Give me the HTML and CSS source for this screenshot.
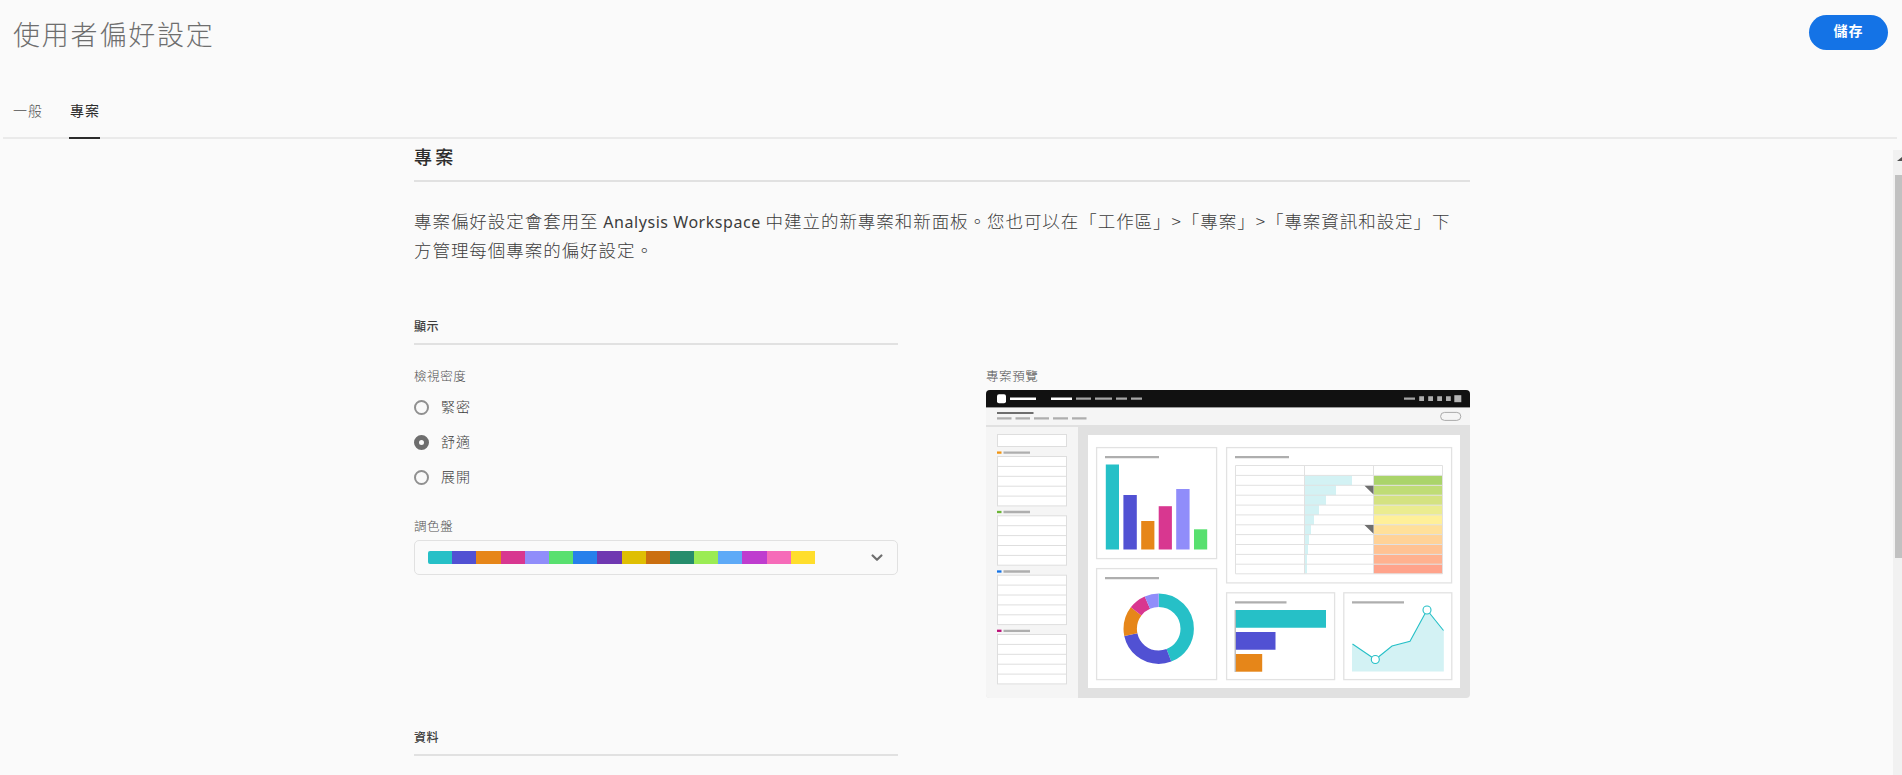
FILE: index.html
```html
<!DOCTYPE html>
<html lang="zh-Hant">
<head>
<meta charset="utf-8">
<title>使用者偏好設定</title>
<link rel="stylesheet" href="styles.css">
</head>
<body>
<header class="header">
  <h1 class="page-title">使用者偏好設定</h1>
  <button class="save">儲存</button>
</header>
<nav class="tabs">
  <a class="tab">一般</a>
  <a class="tab active">專案</a>
</nav>
<div class="scroller">
  <main class="content">
    <h2 class="section-title">專案</h2>
    <p class="intro">專案偏好設定會套用至 <span class="latin">Analysis Workspace</span> 中建立的新專案和新面板。您也可以在「工作區」<span class="gt">&gt;</span>「專案」<span class="gt">&gt;</span>「專案資訊和設定」下<br>方管理每個專案的偏好設定。</p>
    <h3 class="group-title">顯示</h3>
    <div class="columns">
      <div class="column">
        <div class="label">檢視密度</div>
        <div class="radios">
          <label class="radio"><span class="dot"></span><span class="radio-text">緊密</span></label>
          <label class="radio"><span class="dot checked"></span><span class="radio-text">舒適</span></label>
          <label class="radio"><span class="dot"></span><span class="radio-text">展開</span></label>
        </div>
        <div class="label">調色盤</div>
        <div class="select">
          <div class="palette">
            <i class="c1"></i><i class="c2"></i><i class="c3"></i><i class="c4"></i><i class="c5"></i><i class="c6"></i><i class="c7"></i><i class="c8"></i><i class="c9"></i><i class="c10"></i><i class="c11"></i><i class="c12"></i><i class="c13"></i><i class="c14"></i><i class="c15"></i><i class="c16"></i>
          </div>
          <svg class="chevron" width="12" height="8" viewBox="0 0 12 8"><path d="M1.6 1.5 6 5.8 10.4 1.5" fill="none" stroke="#6e6e6e" stroke-width="2.2" stroke-linecap="round" stroke-linejoin="round"/></svg>
        </div>
      </div>
      <div class="column">
        <div class="label">專案預覽</div>
        <svg class="preview" width="484" height="308" viewBox="986 390 484 308">
          <defs>
            <clipPath id="frame"><rect x="986" y="390" width="484" height="308" rx="4"/></clipPath>
            <g id="list">
              <rect x="997.5" y=".5" width="69" height="49.4" fill="#fff"/>
              <path d="M997.5 10.4h69m-69 9.9h69m-69 9.9h69m-69 9.9h69"/>
            </g>
          </defs>
          <g clip-path="url(#frame)">
            <rect x="986" y="390" width="484" height="308" fill="#e1e1e1"/>
            <rect x="986" y="407" width="484" height="18" fill="#f5f5f5"/>
            <rect x="986" y="427" width="92" height="271" fill="#f5f5f5"/>
            <rect x="986" y="390" width="484" height="17" fill="#111"/>
            <rect x="986" y="407" width="484" height="1" fill="#999"/>
            <rect x="1088" y="435" width="372" height="253" fill="#fff"/>
          </g>
          <rect x="997" y="394.2" width="9" height="9" rx="2" fill="#fff"/>
          <path d="M1010 398.7h26m15 0h21" stroke="#fff" stroke-width="2.4"/>
          <path d="M1076 398.7h15m4 0h17m4 0h11m4 0h11M1404 398.7h11" stroke="#a5a5a5" stroke-width="2.3"/>
          <path d="M1419.2 398.7h4.8m4.2 0h4.8m4.2 0h4.8m4 0h4.8" stroke="#aeaeae" stroke-width="4.8"/>
          <rect x="1454.3" y="395.2" width="7" height="7" fill="#b5b5b5"/>
          <path d="M997 413h36.500" stroke="#6e6e6e" stroke-width="2.2"/>
          <path d="M997 418.4h14.500m4 0H1030m4 0h15m4 0h15m4 0h14.500" stroke="#aeaeae" stroke-width="2.4"/>
          <rect x="1440.6" y="412.4" width="20.2" height="8" rx="4" fill="none" stroke="#aaa"/>

          <g stroke="#dedede" fill="none">
            <rect x="997.5" y="434.5" width="69" height="12" fill="#fff"/>
            <use href="#list" y="456"/>
            <use href="#list" y="515.3"/>
            <use href="#list" y="574.7"/>
            <use href="#list" y="634"/>
          </g>
          <g stroke-width="2.3">
            <path d="M997 452.6h4.500" stroke="#f29411"/>
            <path d="M997 512h4.500" stroke="#6bb536"/>
            <path d="M997 571.5h4.500" stroke="#1473e6"/>
            <path d="M997 630.8h4.500" stroke="#bc0f78"/>
            <path d="M1003.5 452.6h26.500m-26.500 59.400h26.500m-26.500 59.500h26.500m-26.500 59.300h26.500" stroke="#aeaeae"/>
          </g>

          <g fill="#fff" stroke="#e2e2e2" stroke-width="1.3">
            <rect x="1096.6" y="447.6" width="120" height="111"/>
            <rect x="1096.6" y="568.6" width="120" height="111"/>
            <rect x="1226.6" y="447.6" width="225" height="135.3"/>
            <rect x="1226.6" y="592.8" width="108" height="86.8"/>
            <rect x="1343.8" y="592.8" width="108" height="86.8"/>
          </g>
          <path d="M1105 457.1h54m76 0h54M1105 578.1h54m76 24.2h51.500m65.500 0h52" stroke="#aeaeae" stroke-width="2.2"/>

          <path d="M1105.800 464.400h13.200V549.500h-13.200z" fill="#26c0c7"/>
          <path d="M1123.400 495h13.400v54.500h-13.400z" fill="#5151d3"/>
          <path d="M1141.200 521h13.200v28.500h-13.200z" fill="#e68619"/>
          <path d="M1158.700 506.200h13.200v43.300h-13.200z" fill="#d83790"/>
          <path d="M1176.200 489h13.400v60.500h-13.400z" fill="#908dfa"/>
          <path d="M1194 529.300h13.200v20.200h-13.200z" fill="#58e06f"/>

          <g transform="rotate(-90 1158.700 628.700)" fill="none" stroke-width="13.400">
            <circle cx="1158.700" cy="628.700" r="28.500" pathLength="360" stroke="#26c0c7" stroke-dasharray="159 360"/>
            <circle cx="1158.700" cy="628.700" r="28.500" pathLength="360" stroke="#5151d3" stroke-dasharray="99 360" stroke-dashoffset="-159"/>
            <circle cx="1158.700" cy="628.700" r="28.500" pathLength="360" stroke="#e68619" stroke-dasharray="49.600 360" stroke-dashoffset="-258"/>
            <circle cx="1158.700" cy="628.700" r="28.500" pathLength="360" stroke="#d83790" stroke-dasharray="29 360" stroke-dashoffset="-307.600"/>
            <circle cx="1158.700" cy="628.700" r="28.500" pathLength="360" stroke="#908dfa" stroke-dasharray="23.400 360" stroke-dashoffset="-336.600"/>
          </g>

          <path fill="#d3f2f4" d="M1304.500 475.400H1352v9.900h-16v9.900h-10v9.900h-7v9.900h-5v9.900h-3v9.900h-2v9.900h-1v9.900h-1v19h-2.500z"/>
          <g>
            <rect x="1373.500" y="475.400" width="69" height="9.900" fill="#aad46a"/>
            <rect x="1373.500" y="485.300" width="69" height="9.900" fill="#bfdc76"/>
            <rect x="1373.500" y="495.200" width="69" height="9.900" fill="#d4e281"/>
            <rect x="1373.500" y="505.100" width="69" height="9.900" fill="#ebec90"/>
            <rect x="1373.500" y="514.900" width="69" height="9.900" fill="#fff099"/>
            <rect x="1373.500" y="524.800" width="69" height="9.900" fill="#ffe09a"/>
            <rect x="1373.500" y="534.600" width="69" height="9.900" fill="#ffd297"/>
            <rect x="1373.500" y="544.500" width="69" height="9.900" fill="#ffc293"/>
            <rect x="1373.500" y="554.400" width="69" height="9.900" fill="#ffb18f"/>
            <rect x="1373.500" y="564.200" width="69" height="9.600" fill="#ffa38b"/>
          </g>
          <path d="M1235.500 465.500h207V573.800h-207zM1304.500 465.500v108.300M1373.500 465.500v108.300M1235.500 475.400h207m-207 9.900h207m-207 9.900h207m-207 9.900h207m-207 9.800h207m-207 9.900h207m-207 9.800h207m-207 9.900h207m-207 9.900h207m-207 9.800h207" fill="none" stroke="#e1e1e1"/>
          <path d="M1364.500 485.800h9v8.800zM1364.500 525h9v8.800z" fill="#6e6e6e"/>

          <path d="M1235.500 610H1326v17.700h-90.500z" fill="#26c0c7"/>
          <path d="M1235.500 632h40v17.700h-40z" fill="#5151d3"/>
          <path d="M1235.500 654h26.700v17.700h-26.700z" fill="#e68619"/>
          <path d="M1235.200 610v62" stroke="#b3b3b3" stroke-width="1.200"/>

          <path d="M1352 644 1375.300 659.500 1392 646 1410 641.300 1427 610 1443.800 630.500V671.500H1352z" fill="#d3f2f4"/>
          <path d="M1352.500 644 1375.300 659.500 1392 646 1410 641.300 1427 610 1443.500 630.500" fill="none" stroke="#26c0c7" stroke-width="1.100"/>
          <g fill="#fff" stroke="#26c0c7" stroke-width="1.100">
            <circle cx="1375.300" cy="659.500" r="4"/>
            <circle cx="1427" cy="610" r="4"/>
          </g>
        </svg>
      </div>
    </div>
    <h3 class="group-title">資料</h3>
  </main>
  <div class="scrollbar"><span class="arrow"></span><span class="thumb"></span></div>
</div>
</body>
</html>
```
FILE: styles.css
```css
* { box-sizing: border-box; }

body {
  margin: 0;
  height: 775px;
  overflow: hidden;
  display: flex;
  flex-direction: column;
  background: #fafafa;
  color: #3c3c3c;
  font-family: "Noto Sans CJK TC", sans-serif;
}

h1, h2, h3, p { margin: 0; }

.header {
  display: flex;
  justify-content: space-between;
  align-items: flex-start;
  height: 90px;
  padding: 15px 14px 0 13px;
}

.page-title {
  font-size: 27px;
  font-weight: 300;
  line-height: 38px;
  letter-spacing: 1.8px;
  color: #6e6e6e;
}

.save {
  width: 79px;
  height: 35px;
  padding: 0 0 5px 0;
  border: 0;
  border-radius: 18px;
  background: #1473e6;
  color: #fff;
  font: bold 14px "Noto Sans CJK TC", sans-serif;
  letter-spacing: 1px;
}

.save { margin-top: 0; }

.tabs {
  display: flex;
  gap: 26px;
  height: 49px;
  margin: 0 5px 0 3px;
  padding-left: 10px;
  border-bottom: 2px solid #eaeaea;
}

.tab {
  height: 49px;
  font-size: 14px;
  font-weight: 300;
  letter-spacing: 1px;
  line-height: 41px;
  color: #505050;
}

.tab.active {
  width: 31px;
  padding-left: 1px;
  border-bottom: 2px solid #2c2c2c;
  color: #2c2c2c;
  font-weight: 400;
}

.scroller {
  flex: 1;
  display: flex;
  justify-content: space-between;
  min-height: 0;
  overflow: hidden;
}

.content {
  width: 1056px;
  margin-left: 414px;
}

.section-title {
  height: 43px;
  border-bottom: 2px solid #e1e1e1;
  font-size: 18px;
  font-weight: 500;
  letter-spacing: 3.2px;
  line-height: 35px;
  color: #2c2c2c;
}

.intro {
  height: 132px;
  padding-top: 24px;
  font-size: 17.5px;
  font-weight: 300;
  line-height: 29px;
  letter-spacing: .95px;
  white-space: nowrap;
}

.latin {
  font-family: "Noto Sans", sans-serif;
  font-size: 16px;
  font-weight: 400;
  line-height: 1;
  letter-spacing: .55px;
}

.group-title {
  width: 484px;
  height: 31px;
  border-bottom: 2px solid #e1e1e1;
  font-size: 12px;
  font-weight: 500;
  line-height: 24px;
  letter-spacing: .6px;
}

.columns {
  display: flex;
  gap: 88px;
  height: 380px;
  padding-top: 22px;
}

.column { width: 484px; }

.label {
  height: 23px;
  font-size: 12.5px;
  font-weight: 300;
  line-height: 17px;
  letter-spacing: .6px;
  color: #505050;
}

.radios { height: 127px; }

.radio {
  display: flex;
  align-items: center;
  gap: 12px;
  height: 35px;
  font-size: 14px;
  font-weight: 300;
  letter-spacing: 1px;
  line-height: 30px;
}

.radio-text { padding-bottom: 3px; }

.dot {
  width: 15px;
  height: 15px;
  border: 2px solid #909090;
  border-radius: 50%;
}

.dot.checked {
  border: 5px solid #6e6e6e;
}

.select {
  display: flex;
  align-items: center;
  justify-content: space-between;
  height: 35px;
  padding: 0 14px 0 13px;
  border: 1px solid #e1e1e1;
  border-radius: 5px;
}

.palette {
  display: flex;
  width: 387px;
  height: 13px;
  border-radius: 2px 0 0 2px;
  overflow: hidden;
}

.palette i { flex: 1; }
.c1 { background: #26c0c7; }
.c2 { background: #5151d3; }
.c3 { background: #e68619; }
.c4 { background: #d83790; }
.c5 { background: #908dfa; }
.c6 { background: #58e06f; }
.c7 { background: #2780eb; }
.c8 { background: #6f38b1; }
.c9 { background: #dfbf03; }
.c10 { background: #cb6f10; }
.c11 { background: #268d6c; }
.c12 { background: #9bec54; }
.c13 { background: #5eaaf7; }
.c14 { background: #bf3dcf; }
.c15 { background: #f66bb9; }
.c16 { background: #ffde2c; }

.preview { display: block; }

.scrollbar {
  display: flex;
  flex-direction: column;
  width: 9px;
  margin-top: 11px;
  padding: 7px 0 0 2px;
  background: #f1f1f1;
  overflow: hidden;
}

.arrow {
  width: 0;
  height: 0;
  margin: 0 0 14px 2px;
  border: solid transparent;
  border-width: 0 5px 4px;
  border-bottom-color: #505050;
}

.thumb {
  width: 13px;
  height: 383px;
  background: #c1c1c1;
}
```
